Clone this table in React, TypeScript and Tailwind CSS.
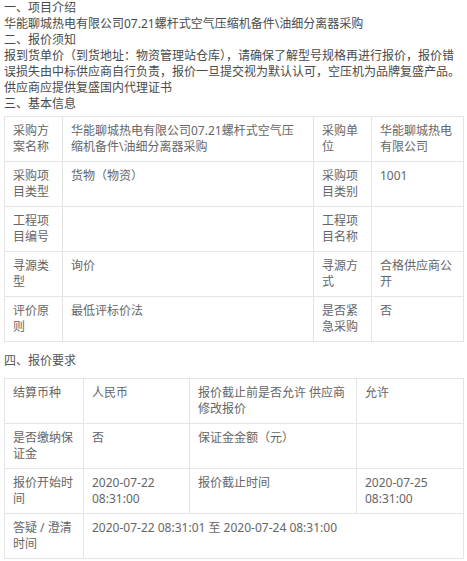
import React from "react";

// ============================================
// DATA
// ============================================

type Cell = { text: string; span?: number };

const basicRows: Cell[][] = [
    [
        { text: "采购方案名称" },
        { text: "华能聊城热电有限公司07.21螺杆式空气压缩机备件\\油细分离器采购" },
        { text: "采购单位" },
        { text: "华能聊城热电有限公司" },
    ],
    [{ text: "采购项目类型" }, { text: "货物（物资）" }, { text: "采购项目类别" }, { text: "1001" }],
    [{ text: "工程项目编号" }, { text: "" }, { text: "工程项目名称" }, { text: "" }],
    [{ text: "寻源类型" }, { text: "询价" }, { text: "寻源方式" }, { text: "合格供应商公开" }],
    [{ text: "评价原则" }, { text: "最低评标价法" }, { text: "是否紧急采购" }, { text: "否" }],
];

const quoteRows: Cell[][] = [
    [
        { text: "结算币种" },
        { text: "人民币" },
        { text: "报价截止前是否允许 供应商修改报价" },
        { text: "允许" },
    ],
    [{ text: "是否缴纳保证金" }, { text: "否" }, { text: "保证金金额（元）" }, { text: "" }],
    [
        { text: "报价开始时间" },
        { text: "2020-07-22 08:31:00" },
        { text: "报价截止时间" },
        { text: "2020-07-25 08:31:00" },
    ],
    [{ text: "答疑 / 澄清时间" }, { text: "2020-07-22 08:31:01 至 2020-07-24 08:31:00", span: 3 }],
];

// ============================================
// TABLE
// ============================================

const InfoGrid: React.FC<{ rows: Cell[][]; cols: string }> = ({ rows, cols }) => (
    <div className={`grid ${cols} w-[460px] gap-px bg-[#e4e4e4] p-px`}>
        {rows.flatMap((row, r) =>
            row.map((cell, c) => (
                <div
                    key={`${r}-${c}`}
                    className={`bg-white px-[8px] py-[6px] text-[#666] leading-4 ${
                        cell.span === 3 ? "col-span-3" : ""
                    }`}
                >
                    {cell.text}
                </div>
            ))
        )}
    </div>
);

export default function App() {
    return (
        <div
            className="w-[467px] bg-white pl-[4px] text-[12px] leading-4"
            style={{ fontFamily: '"Noto Sans", "Noto Sans CJK SC", sans-serif' }}
        >
            <div className="w-[460px] text-[#4a4a4a] break-all">
                <div>一、项目介绍</div>
                <div>华能聊城热电有限公司07.21螺杆式空气压缩机备件\油细分离器采购</div>
                <div>二、报价须知</div>
                <div>
                    报到货单价（到货地址：物资管理站仓库），请确保了解型号规格再进行报价，报价错误损失由中标供应商自行负责，报价一旦提交视为默认认可，空压机为品牌复盛产品。供应商应提供复盛国内代理证书
                </div>
                <div>三、基本信息</div>
            </div>

            <div className="mt-[4px]">
                <InfoGrid rows={basicRows} cols="grid-cols-[57px_250px_57px_1fr]" />
            </div>

            <div className="mt-[11px] mb-[9px] text-[#555]">四、报价要求</div>

            <InfoGrid rows={quoteRows} cols="grid-cols-[78px_105px_166px_1fr]" />
            <div className="h-[4px]" />
        </div>
    );
}
